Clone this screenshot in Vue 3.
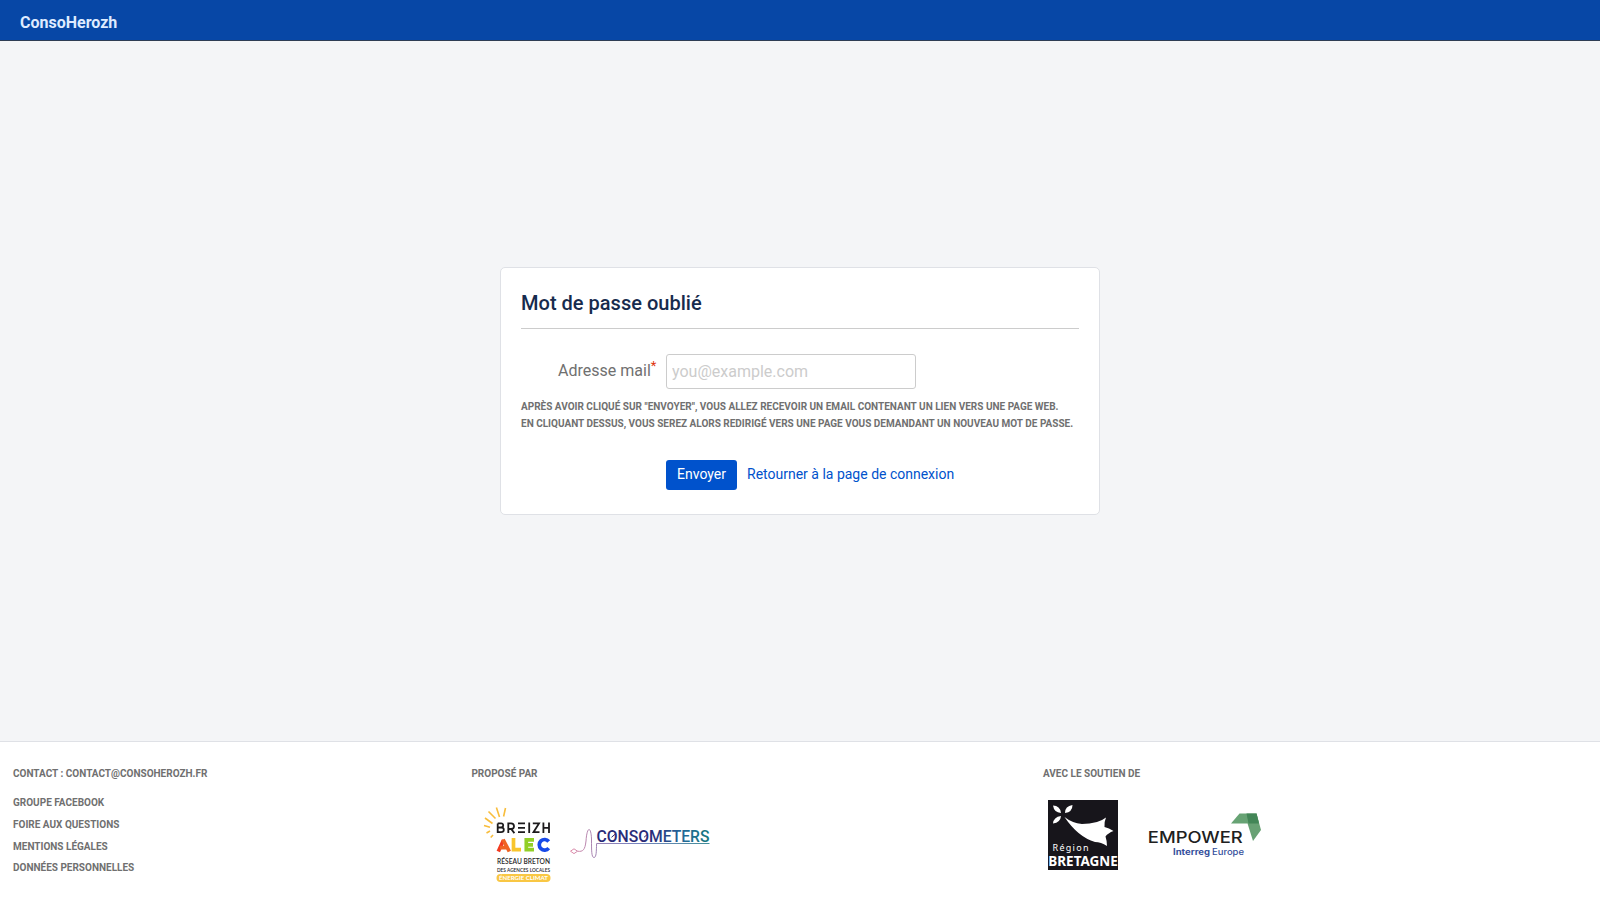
<script setup>
const links = ['Groupe Facebook', 'Foire aux questions', 'Mentions légales', 'Données personnelles']
</script>

<template>
  <div class="page">
    <header class="topbar"><a class="brand">ConsoHerozh</a></header>

    <main class="content">
      <section class="card">
        <h2>Mot de passe oublié</h2>
        <form @submit.prevent>
          <div class="field">
            <label for="email">Adresse mail<span class="required">*</span></label>
            <input id="email" type="email" placeholder="you@example.com" />
          </div>
          <p class="help">
            Après avoir cliqué sur "Envoyer", vous allez recevoir un email contenant un lien vers une page web.<br />
            En cliquant dessus, vous serez alors redirigé vers une page vous demandant un nouveau mot de passe.
          </p>
          <div class="actions">
            <button type="submit">Envoyer</button>
            <a class="back">Retourner à la page de connexion</a>
          </div>
        </form>
      </section>
    </main>

    <footer class="footer">
      <div class="col contact">
        <h6>Contact : contact@consoherozh.fr</h6>
        <ul>
          <li v-for="l in links" :key="l">{{ l }}</li>
        </ul>
      </div>

      <div class="col partners">
        <h6>Proposé par</h6>
        <div class="logos">
          <svg class="breizh" width="85" height="90" viewBox="0 0 85 90">
            <g stroke="#f8bd3c" stroke-width="1.600" fill="none">
              <path d="M30.500 8 28.600 16.500M21.400 7.500 24.500 17M13.500 11.500 20.500 18.500M10 18 17.500 23.500M9 25.500 15 27.300M11.500 33 15 31M15.700 37.500 18 35" />
            </g>
            <g fill="none" stroke="#1c1a1c" stroke-width="1.800">
              <path d="M22.700 23.400V32.200H26Q28.800 32.200 28.800 29.800T26 27.500H22.700M26 27.500Q28.200 27.300 28.200 25.300T26 23.400H22.700" />
              <path d="M33.300 33.100V23.400H36Q39 23.500 39 26.200T36 29H33.300M36.200 29 39.400 33.100" />
              <path d="M43 23.400H50M43 27.800H50M43 32.200H50M54.200 22.500V33.100M57.800 23.400H64L58.500 32.200H64.500M68.400 22.500V33.100M74 22.500V33.100M68.400 27.800H74" />
            </g>
            <g fill="none" stroke-width="3.700">
              <path d="M23.300 51.500 28.600 40" stroke="#f23b20" />
              <path d="M28 39.500 34.300 51.500M25 47.700H33" stroke="#ef6322" />
              <path d="M38.500 38V49.600H46" stroke="#f8c52d" />
              <path d="M59 39.900H51.300V49.600H59M51.300 44.800H58" stroke="#92cf26" />
              <path d="M73.700 41.500A5.300 5.300 0 1 0 73.700 48.100" stroke="#1749e8" />
            </g>
            <text x="22" y="64" textLength="53" lengthAdjust="spacingAndGlyphs" class="geo" font-size="6.700" font-weight="600">RÉSEAU BRETON</text>
            <text x="22" y="71.500" textLength="53" lengthAdjust="spacingAndGlyphs" class="geo" font-size="5" font-weight="600">DES AGENCES LOCALES</text>
            <rect x="21.500" y="74" width="54" height="8" rx="4" fill="#f9c744" />
            <text x="24" y="80.100" textLength="49" lengthAdjust="spacingAndGlyphs" class="geo pale" font-size="5.700" font-weight="700">ÉNERGIE CLIMAT</text>
          </svg>
          <svg class="meters" width="160" height="55" viewBox="0 0 160 55">
            <defs>
              <linearGradient id="word" gradientUnits="userSpaceOnUse" x1="36" y1="0" x2="149" y2="0">
                <stop offset="0.500" stop-color="#292b78" />
                <stop offset="0.750" stop-color="#24679b" />
                <stop offset="1" stop-color="#19777d" />
              </linearGradient>
              <linearGradient id="pulse" gradientUnits="userSpaceOnUse" x1="10" y1="0" x2="149" y2="0">
                <stop offset="0" stop-color="#e28ba8" />
                <stop offset="0.200" stop-color="#9c83b3" />
                <stop offset="0.450" stop-color="#7a83c0" />
                <stop offset="1" stop-color="#438e9b" />
              </linearGradient>
            </defs>
            <path d="M10.500 36.200 14 33.800 17.500 36.200 14 38.600ZM17.500 36.200C23 37 25 35 26 26 27 11 31 11 31.500 24 31.500 36 31.500 42.500 34 42.500 36.500 42.500 36.300 36 36.600 28.500H149.500" fill="none" stroke="url(#pulse)" stroke-width="1" />
            <text x="36.500" y="26.700" textLength="113" lengthAdjust="spacingAndGlyphs" class="conso" fill="url(#word)">CONSOMETERS</text>
            <path d="M51.500 22.300 55 19.300M84 22.300 87.500 19.300" stroke="#292b78" stroke-width="1" />
          </svg>
        </div>
      </div>

      <div class="col support">
        <h6>Avec le soutien de</h6>
        <div class="logos">
          <svg class="bretagne" width="70" height="70" viewBox="0 0 70 70">
            <rect width="70" height="70" fill="#17151b" />
            <g fill="#fff">
              <path d="M5 5.500Q12 5.500 13 13Q6 12.500 5 5.500ZM24.500 5Q24.500 12 17 13Q17 6 24.500 5ZM5 23.500Q5.500 17 13 16Q12.500 22.500 5 23.500Z" />
              <path d="M16.500 17Q24 23 34 24Q50 24 58 17.500Q56 22 56.500 27Q61 28 65.500 31Q60 33 57.500 36.500Q59 41 59 46Q53 42 47 42Q30 37 16.500 17Z" />
            </g>
            <text x="4.500" y="50.700" textLength="36" class="region">Région</text>
            <text x="0.300" y="65.800" textLength="69.500" lengthAdjust="spacingAndGlyphs" class="bzh">BRETAGNE</text>
          </svg>
          <svg class="empower" width="140" height="70" viewBox="0 0 140 70">
            <text x="12.800" y="43" textLength="95" lengthAdjust="spacingAndGlyphs" class="emp">EMPOWER</text>
            <text x="38" y="54.700" textLength="37" lengthAdjust="spacingAndGlyphs" class="eu strong">Interreg</text>
            <text x="77" y="54.700" textLength="32" lengthAdjust="spacingAndGlyphs" class="eu">Europe</text>
            <path d="M104.500 13.500H121.500L124 23.500H96Z" fill="#67a374" />
            <path d="M121.500 13.500 126 30 118 41 112.500 23.500Z" fill="#68a174" />
            <path d="M111.500 13.500H121.500L124 23.500H113.500Z" fill="#438657" />
          </svg>
        </div>
      </div>
    </footer>
  </div>
</template>

<style>
body { margin: 0; overflow: hidden; }
</style>

<style scoped>
.page { height: 900px; display: flex; flex-direction: column; background: #f4f5f7; font-family: Roboto, sans-serif; font-size: 14px; color: #172b4d; }
.topbar { height: 41px; flex: none; background: #0747a6; border-bottom: 1px solid #2e3d54; display: flex; align-items: center; padding: 6px 20px 0; box-sizing: border-box; }
.brand { font-size: 16px; font-weight: 700; color: #deebff; line-height: 20px; }
.content { flex: 1; display: flex; justify-content: center; align-items: flex-start; padding-top: 226px; }
.card { width: 600px; height: 248px; box-sizing: border-box; background: #fff; border: 1px solid #dfe1e6; border-radius: 5px; padding: 20px; }
h2 { margin: 0 0 25px; height: 40px; line-height: 30px; border-bottom: 1px solid #ccc; font-size: 20px; font-weight: 500; letter-spacing: 0.02px; }
.field { display: flex; gap: 10px; height: 35px; }
label { width: 135px; text-align: right; font-size: 16px; line-height: 34px; color: #707070; }
.required { color: #de350b; font-size: 13px; margin-right: -0.4px; vertical-align: 6px; line-height: 0; }
input { width: 250px; height: 35px; box-sizing: border-box; border: 1px solid #ccc; border-radius: 3px; padding: 0 5px 1px; font: 16px Roboto, sans-serif; background: #fff; }
input::placeholder { color: #ccc; opacity: 1; }
.help { margin: 9px 0 0; font-size: 10px; font-weight: 700; line-height: 17px; text-transform: uppercase; color: #707070; white-space: nowrap; }
.actions { display: flex; align-items: center; gap: 10px; margin: 28px 0 0 145px; }
button { height: 30px; width: 71px; padding: 0 0 2px; border: 0; border-radius: 3px; background: #0052cc; color: #fff; font: 14px Roboto, sans-serif; }
.back { color: #0052cc; line-height: 20px; padding-bottom: 2px; }
.footer { height: 159px; flex: none; box-sizing: border-box; border-top: 1px solid #dfe1e6; background: #fff; display: flex; padding: 23px 13px 0; }
h6, li { margin: 0; font-size: 10px; font-weight: 700; color: #707070; text-transform: uppercase; line-height: 17px; }
ul { list-style: none; margin: 10.4px 0 0; padding: 0; }
li { line-height: 21.6px; }
.contact { width: 458.4px; }
.partners { width: 571.6px; }
.logos { display: flex; align-items: flex-start; }
.breizh { margin: 18px 0 0 3.600px; }
.meters { margin-top: 33px; }
.bretagne { margin: 18px 0 0 5px; }
.empower { margin: 18px 0 0 17px; }
.geo { font-family: Lato, sans-serif; fill: #29272a; }
.pale { fill: #fff; }
.conso { font: 500 15.800px Roboto, sans-serif; }
.region { font: 9px "Noto Sans", sans-serif; fill: #fff; }
.bzh { font: 700 13.800px "Noto Sans", sans-serif; fill: #fff; }
.emp { font: 500 15.500px Inter, sans-serif; fill: #202020; }
.eu { font: 500 8.500px Inter, sans-serif; fill: #354f9c; }
.strong { font-weight: 700; }
</style>
